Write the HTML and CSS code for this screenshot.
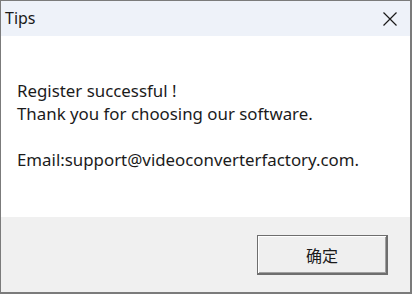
FILE: index.html
```html
<!DOCTYPE html>
<html>
<head>
<meta charset="utf-8">
<link rel="stylesheet" href="styles.css">
</head>
<body>
<div class="window">
  <div class="titlebar">
    <span class="title">Tips</span>
    <svg class="close" width="16" height="16" viewBox="0 0 16 16"><path d="M1.5 1.5 L14.5 14.5 M14.5 1.5 L1.5 14.5" stroke="#1a1a1a" stroke-width="1.2" fill="none"/></svg>
  </div>
  <div class="content">
    <p class="line">Register successful !</p>
    <p class="line">Thank you for choosing our software.</p>
    <p class="line blank">&nbsp;</p>
    <p class="line">Email:support@videoconverterfactory.com.</p>
  </div>
  <div class="footer">
    <button class="ok">确定</button>
  </div>
</div>
</body>
</html>
```
FILE: styles.css
```css
html, body {
  margin: 0;
  padding: 0;
  background: #ffffff;
}
.window {
  width: 412px;
  height: 294px;
  box-sizing: border-box;
  border-top: 1px solid #7b7b7b;
  border-left: 1px solid #7b7b7b;
  border-right: 2px solid #7b7b7b;
  border-bottom: 2px solid #7b7b7b;
  display: flex;
  flex-direction: column;
  font-family: "Noto Sans", "Noto Sans CJK SC", sans-serif;
  color: #1b1b1b;
}
.titlebar {
  height: 35px;
  background: #eef2f9;
  display: flex;
  align-items: center;
  justify-content: space-between;
  padding: 0 12px 0 4px;
}
.title {
  font-size: 16px;
  color: #1a1a1a;
  margin-top: -1px;
}
.close {
  display: block;
}
.content {
  height: 181px;
  background: #ffffff;
  padding: 43px 0 0 16px;
  box-sizing: border-box;
  font-size: 16.85px;
}
.line {
  margin: 0;
  line-height: 23px;
  height: 23px;
  white-space: nowrap;
}
.footer {
  flex: 1;
  background: #f0f0f0;
  display: flex;
  justify-content: flex-end;
  align-items: flex-start;
  padding: 18px 22px 0 0;
}
.ok {
  width: 131px;
  height: 40px;
  box-sizing: border-box;
  background: #efefef;
  border: 1px solid #6e6e6e;
  border-right-width: 2px;
  border-bottom-width: 2px;
  box-shadow: inset 1px 1px 0 #ffffff, inset -1px -1px 0 #a0a0a0;
  font-family: "Noto Sans CJK SC", sans-serif;
  font-size: 16px;
  color: #1b1b1b;
  padding: 0;
  margin: 0;
}
```
